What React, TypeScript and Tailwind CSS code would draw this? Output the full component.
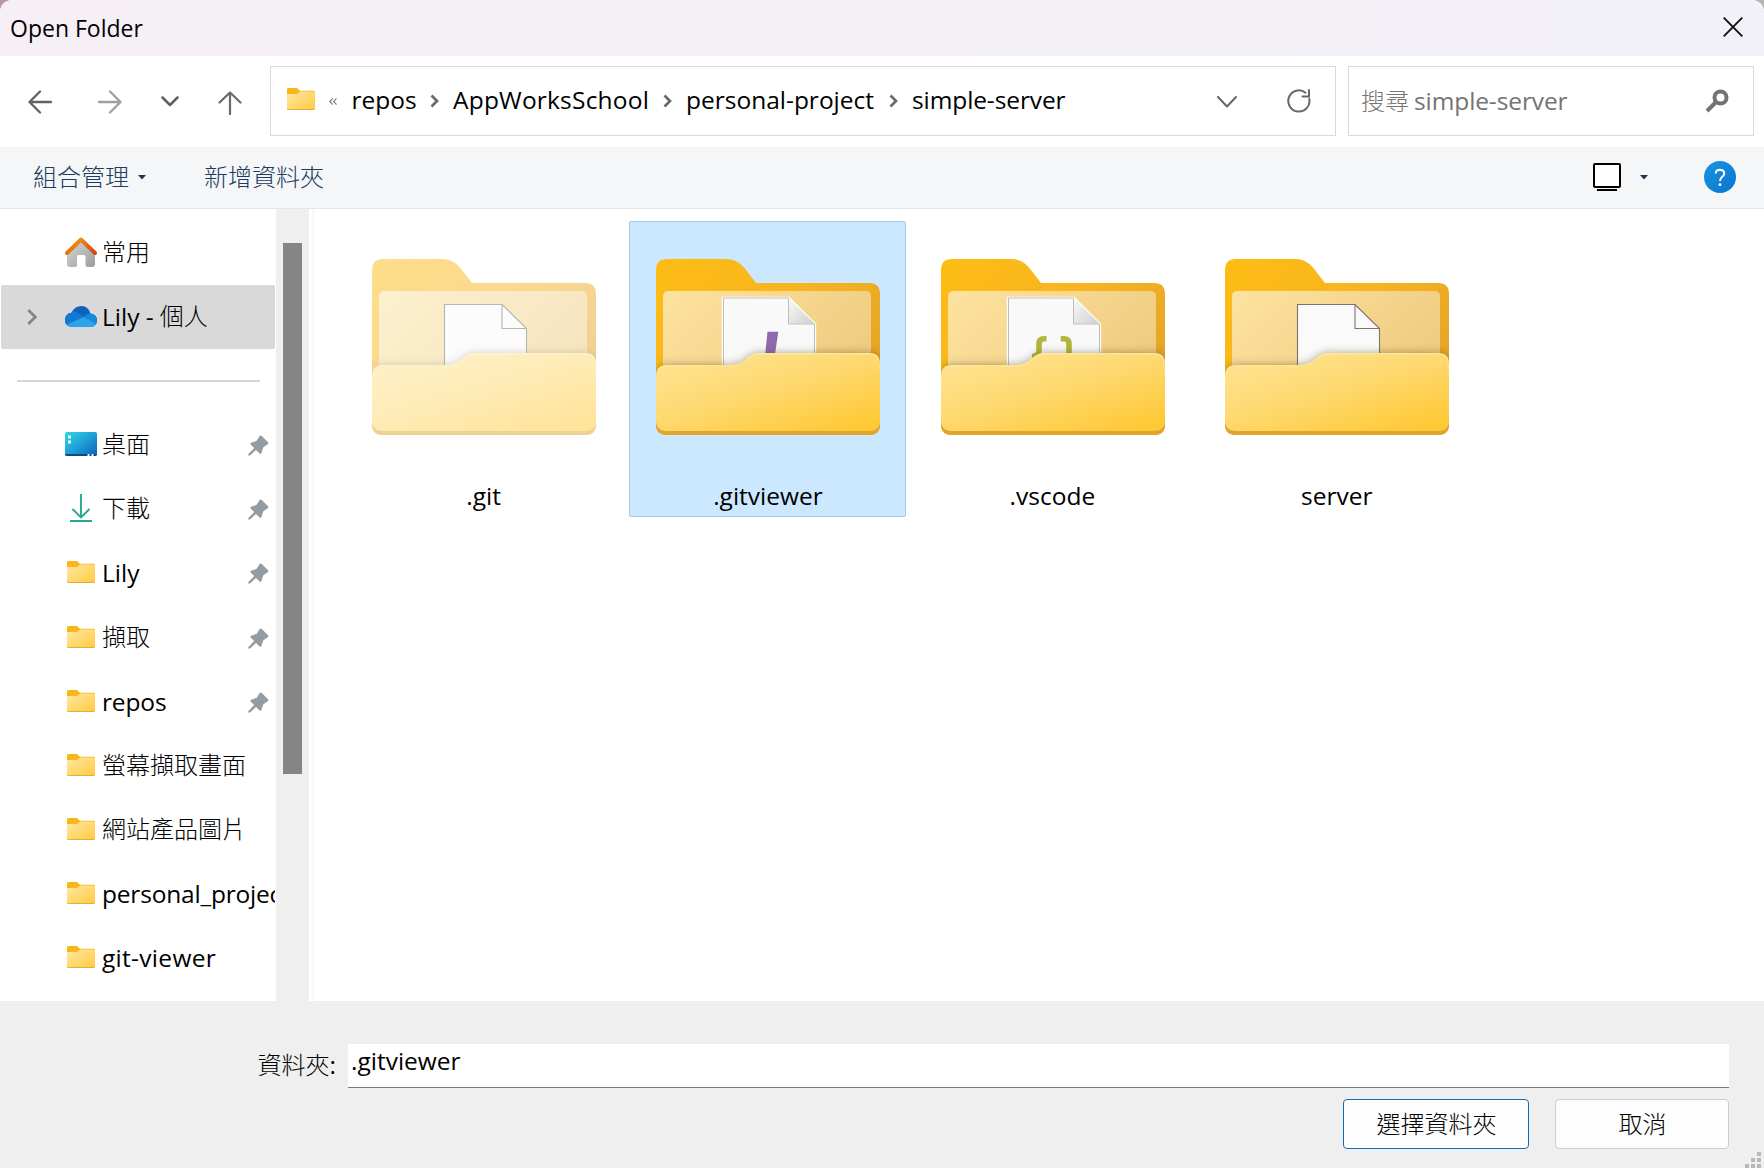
import type { ReactNode } from 'react';

const latin = "font-['Open_Sans','Noto_Sans_CJK_TC',sans-serif]";
const cjk = "font-['Noto_Sans_CJK_TC',sans-serif]";

function SmallFolder() {
  return (
    <svg width="28" height="22" viewBox="0 0 28 22" className="block shrink-0">
      <defs>
        <linearGradient id="sf" x1="0" y1="0" x2="1" y2="1">
          <stop offset="0" stopColor="#ffe8a6" />
          <stop offset="1" stopColor="#fecb3e" />
        </linearGradient>
      </defs>
      <path d="M0 1.200Q0 0 1.200 0H9.200Q10.200 0 11 .8L12.800 2.800H27Q28 2.800 28 4V10H0Z" fill="#f8b51c" />
      <path d="M0 6H9.500Q10.500 6 11.300 5.200L12 4.400Q12.800 3.500 13.800 3.500H27Q28 3.500 28 4.500V20.600Q28 22 26.800 22H1.200Q0 22 0 20.600Z" fill="url(#sf)" />
      <path d="M.2 20.600Q.4 21.600 1.300 21.600H26.700Q27.600 21.600 27.800 20.600" fill="none" stroke="#e2a52f" strokeWidth=".9" />
    </svg>
  );
}

type Doc = 'plain' | 'slash' | 'braces';

function BigFolder({ id, doc, faded }: { id: string; doc: Doc; faded?: boolean }) {
  const front =
    'M0 117Q0 106 11 106H73C84 106 87 102 92 98.5C96 95.500 98 94 104 94H213Q224 94 224 105V161Q224 172 213 172H11Q0 172 0 161Z';
  const url = (n: string) => `url(#${id}${n})`;
  return (
    <svg width="224" height="176" viewBox="0 0 224 176" className={faded ? 'block opacity-50' : 'block'}>
      <defs>
        <linearGradient id={id + 'b'} x1="0" y1="0" x2="1" y2=".8">
          <stop offset="0" stopColor="#fdbd14" />
          <stop offset=".45" stopColor="#f8b51f" />
          <stop offset="1" stopColor="#dfa02b" />
        </linearGradient>
        <linearGradient id={id + 'p'} x1="0" y1="0" x2="1" y2=".5">
          <stop offset="0" stopColor="#fde3a0" />
          <stop offset="1" stopColor="#efcc80" />
        </linearGradient>
        <linearGradient id={id + 'f'} x1="0" y1="0" x2=".85" y2="1">
          <stop offset="0" stopColor="#ffe597" />
          <stop offset=".5" stopColor="#fed971" />
          <stop offset="1" stopColor="#ffc936" />
        </linearGradient>
        <linearGradient id={id + 'd'} x1="0" y1="0" x2="1" y2="1">
          <stop offset="0" stopColor="#fafafa" />
          <stop offset="1" stopColor="#cfcfcf" />
        </linearGradient>
        <linearGradient id={id + 'h'} x1="0" y1="0" x2="0" y2="1">
          <stop offset="0" stopColor="#fff0bd" />
          <stop offset=".3" stopColor="#fff0bd" stopOpacity="0" />
        </linearGradient>
        <filter id={id + 's'} x="-10%" y="-20%" width="120%" height="140%">
          <feGaussianBlur stdDeviation="4" />
        </filter>
        <clipPath id={id + 'c'}>
          <path d="M0 11Q0 0 11 0H70C81 0 86 6 90 11L100 24H213Q224 24 224 35V165Q224 176 213 176H11Q0 176 0 165Z" />
        </clipPath>
        <clipPath id={id + 'k'}>
          <path d={front} />
        </clipPath>
      </defs>
      <g clipPath={url('c')}>
        <rect width="224" height="176" fill={url('b')} />
        <rect x="7" y="32" width="208" height="100" rx="5" fill={url('p')} />
        {doc === 'plain' ? (
          <g stroke={faded ? '#6f6f5f' : '#77746a'} strokeWidth="1.1" fill="#fafafa">
            <path d="M72.500 130V45.500H130L154.500 69.500V130Z" />
            <path d="M130 45.500V69.500H154.500" fill="none" />
          </g>
        ) : (
          <g>
            <path d="M66.500 130V38.500H133L159.500 65V130Z" fill="#f9f9fa" stroke="#ffffff" strokeWidth="1.4" />
            <path d="M132.500 39L158.500 64.500H132.500Z" fill={url('d')} />
            <path d="M67.500 130V39H132.500V65H158.500V130" fill="none" stroke="#bab7af" strokeWidth=".9" />
          </g>
        )}
        {doc === 'slash' && <path d="M111.500 72.700H122.300L118 102H108.500Z" fill="#9068b0" />}
        {doc === 'braces' && (
          <g fill="none" stroke="#b4b53a" strokeWidth="5.600">
            <path d="M105.500 79.800H103Q98 79.800 98 85V92Q98 97 91 97.500" />
            <path d="M119.700 79.800H122.500Q128 79.800 128 85V96" />
          </g>
        )}
        <path d={front} fill="#5c4a20" opacity=".5" filter={url('s')} />
        <path d="M0 150H224V176H0Z" fill="#e0a52f" />
      </g>
      <path d={front} fill={url('f')} />
      <g clipPath={url('k')}>
        <path d={front} fill="none" stroke={url('h')} strokeWidth="3" opacity=".5" />
      </g>
    </svg>
  );
}

function Pin() {
  return (
    <svg width="21" height="21" viewBox="0 0 21 21" className="block shrink-0">
      <path
        d="M11.600 1Q12.600-.2 13.800 1L20 7.200Q21 8.400 19.700 9.300L15.400 12.200L13.400 18Q12.800 19.500 11.600 18.400L8 14.900L2 20.600Q1.200 21 .6 20.400Q0 19.800 .4 19L6.200 13.100L2.800 9.800Q1.700 8.400 3.200 7.800L8.800 5.700Z"
        fill="#929da3"
      />
    </svg>
  );
}

function HomeIcon() {
  return (
    <svg width="32" height="30" viewBox="0 0 32 30" className="block">
      <defs>
        <linearGradient id="hg" x1="0" y1="0" x2="1" y2="1">
          <stop offset="0" stopColor="#d8d8d8" />
          <stop offset="1" stopColor="#9c9c9c" />
        </linearGradient>
        <linearGradient id="hr" x1="0" y1="0" x2="1" y2="1">
          <stop offset="0" stopColor="#f8a010" />
          <stop offset="1" stopColor="#d04a14" />
        </linearGradient>
      </defs>
      <path d="M16 4L30 16V27Q30 30 27 30H22.500Q20.500 30 20.500 28V19.500Q20.500 18 19 18H13.500Q12 18 12 19.500V28Q12 30 10 30H5Q2 30 2 27V16Z" fill="url(#hg)" />
      <path d="M2 16L16 2.500L30 16" fill="none" stroke="url(#hr)" strokeWidth="4" strokeLinecap="round" strokeLinejoin="round" />
    </svg>
  );
}

function CloudIcon() {
  return (
    <svg width="32" height="21" viewBox="0 0 32 21" className="block">
      <defs>
        <clipPath id="cl">
          <path d="M7 21Q0 20.500 0 13.800Q.3 7.600 6.500 6.800Q9.500 0 16.400 0Q23.400 .2 25.400 7.400Q32 8.400 32 14.500Q31.600 21 25.500 21Z" />
        </clipPath>
      </defs>
      <g clipPath="url(#cl)">
        <rect width="32" height="21" fill="#0c62bd" />
        <path d="M0 5H9Q13 6.500 19 10.500L3 21H0Z" fill="#1277d3" />
        <path d="M19 10.500Q22 7 27 7.500L32 9V21L19 12Z" fill="#1689dd" />
        <path d="M0 19.500L18.500 11L32 18.500V21H0Z" fill="#2ba4ea" />
      </g>
    </svg>
  );
}

function DesktopIcon() {
  return (
    <svg width="32" height="24" viewBox="0 0 32 24" className="block">
      <defs>
        <linearGradient id="dg" x1="0" y1="0" x2="1" y2="1">
          <stop offset="0" stopColor="#34d6e0" />
          <stop offset=".5" stopColor="#1ea0d8" />
          <stop offset="1" stopColor="#0f5fb4" />
        </linearGradient>
      </defs>
      <rect width="32" height="24" rx="2" fill="url(#dg)" />
      <path d="M0 22H32Q32 24 30 24H2Q0 24 0 22Z" fill="#0c4a80" />
      <path d="M3 3.500H6V6.500H3ZM3 8.500H6V11.500H3ZM22.500 22H24.500V24H22.500ZM26.500 22H28.500V24H26.500Z" fill="#e6fbff" />
    </svg>
  );
}

function DownloadIcon() {
  return (
    <svg width="22" height="28" viewBox="0 0 22 28" className="block" fill="none" stroke="#27a98f" strokeWidth="1.900">
      <path d="M11 0V23M2.500 15L11 23.500L19.500 15M0 27H22" />
    </svg>
  );
}

function Row({ icon, children, pin, selected, extra }: { icon: ReactNode; children: ReactNode; pin?: boolean; selected?: boolean; extra?: string }) {
  return (
    <div className={`mx-px flex h-16 shrink-0 items-center overflow-hidden ${selected ? 'rounded-[2px] bg-[#d9d9d9]' : ''} ${extra ?? ''}`}>
      <div className="flex w-16 shrink-0 items-center pl-[26px]">
        {selected && (
          <svg width="10" height="16" viewBox="0 0 10 16" fill="none" stroke="#858585" strokeWidth="2.800">
            <path d="M1.300 1L8.300 8L1.300 15" />
          </svg>
        )}
      </div>
      <div className="-mt-0.5 flex w-8 shrink-0 justify-center">{icon}</div>
      <div className="-mt-px ml-[5px] min-w-0 flex-1 whitespace-nowrap">{children}</div>
      {pin && (
        <div className="mr-[6px]">
          <Pin />
        </div>
      )}
    </div>
  );
}

const En = ({ children }: { children: ReactNode }) => <span className={`${latin} text-[24.5px] leading-8`}>{children}</span>;
const Zh = ({ children }: { children: ReactNode }) => (
  <span className={`${cjk} inline-block pb-[3px] text-2xl leading-8 font-light`}>{children}</span>
);

function Tile({ id, name, doc, faded, selected }: { id: string; name: string; doc: Doc; faded?: boolean; selected?: boolean }) {
  return (
    <div
      className={`flex h-[296px] w-[277px] flex-col items-center rounded-[2px] border pt-[37px] ${selected ? 'border-[#9fcdf0] bg-[#cce8ff]' : 'border-transparent'}`}
    >
      <div className="ml-0.5">
        <BigFolder id={id} doc={doc} faded={faded} />
      </div>
      <div className="mt-[45px] ml-px">
        <En>{name}</En>
      </div>
    </div>
  );
}

function Crumb() {
  return (
    <svg width="9" height="14" viewBox="0 0 9 14" fill="none" stroke="#6a6a6a" strokeWidth="2.700" className="mt-[3px] shrink-0">
      <path d="M1.500 1.500L7 7L1.500 12.500" />
    </svg>
  );
}

function Caret({ className }: { className?: string }) {
  return (
    <svg width="8" height="5" viewBox="0 0 8 5" className={className}>
      <path d="M0 0H8L4 4.600Z" fill="#1f3354" />
    </svg>
  );
}

export default function App() {
  return (
    <div className="h-[1168px] w-[1764px] overflow-hidden bg-gradient-to-r from-[#b795ae] to-[#b5b5b5] text-black">
      <div className="flex h-full flex-col overflow-hidden rounded-t-[12px] bg-white">
        <header className="flex h-14 shrink-0 items-center justify-between bg-gradient-to-r from-[#f6f0f6] via-[#f4f0f6] to-[#f2f1f7] pr-[21px] pl-[10px]">
          <span className={`${latin} text-[23px] leading-8`}>Open Folder</span>
          <svg width="20" height="20" viewBox="0 0 20 20" fill="none" stroke="#111" strokeWidth="1.900" className="-mt-0.5">
            <path d="M.7 .7L19.300 19.300M19.300 .7L.7 19.300" />
          </svg>
        </header>

        <nav className="flex h-[91px] shrink-0 items-center pl-7">
          <svg width="24" height="24" viewBox="0 0 24 24" fill="none" stroke="#626262" strokeWidth="2.300" strokeLinecap="round" strokeLinejoin="round">
            <path d="M1.500 12H23M12 1.500L1.500 12L12 22.500" />
          </svg>
          <svg width="24" height="24" viewBox="0 0 24 24" fill="none" stroke="#a0a0a0" strokeWidth="2.300" strokeLinecap="round" strokeLinejoin="round" className="ml-[46px]">
            <path d="M1 12H22.500M12 1.500L22.500 12L12 22.500" />
          </svg>
          <svg width="18" height="11" viewBox="0 0 18 11" fill="none" stroke="#5f5f5f" strokeWidth="2.500" strokeLinecap="round" strokeLinejoin="round" className="ml-[39px]">
            <path d="M1.500 1.500L9 9L16.500 1.500" />
          </svg>
          <svg width="24" height="24" viewBox="0 0 24 24" fill="none" stroke="#6a6a6a" strokeWidth="2.200" strokeLinecap="round" strokeLinejoin="round" className="mt-0.5 ml-[39px]">
            <path d="M12 1.500V23M1.500 11.500L12 1.500L22.500 11.500" />
          </svg>
          <div className="-mt-px ml-7 flex h-[70px] w-[1066px] items-center border border-[#d9d9d9] pl-4">
            <div className="-mt-[4px]">
              <SmallFolder />
            </div>
            <svg width="8" height="7" viewBox="0 0 8 7" fill="none" stroke="#777" strokeWidth="1.100" className="ml-[14px]">
              <path d="M3.700 .4L.8 3.500L3.700 6.600M7.500 .4L4.600 3.500L7.500 6.600" />
            </svg>
            <div className="-mt-[3px] ml-[13px] flex items-center whitespace-nowrap">
              <div className="w-[80px] pl-[1.5px]"><En>repos</En></div>
              <Crumb />
              <div className="ml-[14px] w-[210px] tracking-[0.2px]"><En>AppWorksSchool</En></div>
              <Crumb />
              <div className="ml-[14px] w-[203px]"><En>personal-project</En></div>
              <Crumb />
              <div className="ml-[14px] w-[305px] tracking-[-0.1px]"><En>simple-server</En></div>
            </div>
            <svg width="20" height="12" viewBox="0 0 20 12" fill="none" stroke="#666" strokeWidth="2" strokeLinecap="round" strokeLinejoin="round" className="mt-0.5">
              <path d="M1 1L10 10.500L19 1" />
            </svg>
            <svg width="24" height="24" viewBox="0 0 24 24" fill="none" stroke="#666" strokeWidth="2" strokeLinecap="round" className="ml-[50px]">
              <path d="M22.300 10A10.600 10.600 0 1 1 18.500 3.700M22 1V7.500H15.500" />
            </svg>
          </div>
          <div className="-mt-px ml-3 flex h-[70px] w-[406px] items-center justify-between border border-[#d9d9d9] pr-6 pl-3 text-[#747474]">
            <div className="flex items-center gap-[5px] whitespace-nowrap">
              <Zh>搜尋</Zh>
              <div className="-mt-px tracking-[-0.1px]"><En>simple-server</En></div>
            </div>
            <svg width="24" height="24" viewBox="0 0 24 24" fill="none" stroke="#737373">
              <circle cx="15.500" cy="8.500" r="6" strokeWidth="4" />
              <path d="M11 13L2 22" strokeWidth="4" />
            </svg>
          </div>
        </nav>

        <div className="flex h-[62px] shrink-0 items-center border-b border-[#e3e6e8] bg-[#f4f6f8] pr-7 pb-px pl-[33px] text-[#213a5e]">
          <Zh>組合管理</Zh>
          <Caret className="ml-[9px]" />
          <div className="ml-[58px]"><Zh>新增資料夾</Zh></div>
          <svg width="28" height="28" viewBox="0 0 28 28" fill="none" stroke="#000" strokeWidth="2" className="ml-auto">
            <rect x="1" y="1" width="26" height="23" rx="1" fill="#fff" />
            <path d="M4 27H24" />
          </svg>
          <Caret className="ml-[19px]" />
          <svg width="32" height="32" viewBox="0 0 32 32" className="ml-[56px]">
            <defs>
              <linearGradient id="q" x1="0" y1="0" x2="1" y2="1">
                <stop offset="0" stopColor="#1b95e3" />
                <stop offset="1" stopColor="#0874cf" />
              </linearGradient>
            </defs>
            <circle cx="16" cy="16" r="16" fill="url(#q)" />
            <path d="M11.700 12.500Q11.900 8.700 16 8.700Q20.200 8.900 20.200 12.500Q20.200 14.500 18 16Q16 17.500 16 20" fill="none" stroke="#fff" strokeWidth="2" />
            <circle cx="16" cy="23.700" r="1.400" fill="#fff" />
          </svg>
        </div>

        <main className="flex h-[792px] shrink-0">
          <aside className="flex w-[276px] shrink-0 flex-col overflow-hidden pt-3">
            <Row icon={<HomeIcon />}><Zh>常用</Zh></Row>
            <Row icon={<CloudIcon />} selected>
              <span className="flex items-center gap-[6px]"><En>Lily -</En><Zh>個人</Zh></span>
            </Row>
            <div className="flex h-16 shrink-0 items-center pr-4 pl-[17px]">
              <div className="h-0.5 w-full bg-[#d6d6d6]" />
            </div>
            <Row icon={<DesktopIcon />} pin><Zh>桌面</Zh></Row>
            <Row icon={<DownloadIcon />} pin><Zh>下載</Zh></Row>
            <Row icon={<SmallFolder />} pin><En>Lily</En></Row>
            <Row icon={<SmallFolder />} pin extra="mt-px"><Zh>擷取</Zh></Row>
            <Row icon={<SmallFolder />} pin><span className="tracking-[-0.15px]"><En>repos</En></span></Row>
            <Row icon={<SmallFolder />}><Zh>螢幕擷取畫面</Zh></Row>
            <Row icon={<SmallFolder />}><Zh>網站產品圖片</Zh></Row>
            <Row icon={<SmallFolder />}><span className="tracking-[-0.2px]"><En>personal_project</En></span></Row>
            <Row icon={<SmallFolder />}><span className="tracking-[0.3px]"><En>git-viewer</En></span></Row>
          </aside>
          <div className="w-[33px] shrink-0 bg-[#efefef] pt-[34px] pl-[7px]">
            <div className="h-[531px] w-[19px] bg-[#858585]" />
          </div>
          <div className="ml-[3px] w-0.5 shrink-0 bg-[#f8f8f8]" />
          <section className="flex gap-[7.4px] pt-3 pl-[30.6px]">
            <Tile id="a" name=".git" doc="plain" faded />
            <Tile id="b" name=".gitviewer" doc="slash" selected />
            <Tile id="c" name=".vscode" doc="braces" />
            <Tile id="d" name="server" doc="plain" />
          </section>
        </main>

        <footer className="relative flex-1 bg-[#efefef] pt-[43px] pr-[35px]">
          <div className="flex items-center">
            <div className="flex w-[348px] shrink-0 items-center pb-0.5 pl-[257.5px]">
              <Zh>資料夾</Zh>
              <En>:</En>
            </div>
            <div className="h-11 flex-1 border-b border-[#7a7a7a] bg-white pt-px pl-[3px]">
              <En>.gitviewer</En>
            </div>
          </div>
          <div className="mt-[11px] flex justify-end gap-[26px]">
            <button className="h-[50px] w-[186px] rounded-[4px] border border-[#0f6cb8] bg-[#fdfdfd] pl-px"><Zh>選擇資料夾</Zh></button>
            <button className="h-[50px] w-[174px] rounded-[4px] border border-[#cccccc] bg-[#fdfdfd] pl-px"><Zh>取消</Zh></button>
          </div>
          <svg width="19" height="16" viewBox="0 0 19 16" className="absolute right-0 bottom-0" fill="#b9b9b9">
            <path d="M12 0h4v4h-4zM6 6h4v4h-4zM12 6h4v4h-4zM0 12h4v4h-4zM6 12h4v4h-4zM12 12h4v4h-4z" />
          </svg>
        </footer>
      </div>
    </div>
  );
}
